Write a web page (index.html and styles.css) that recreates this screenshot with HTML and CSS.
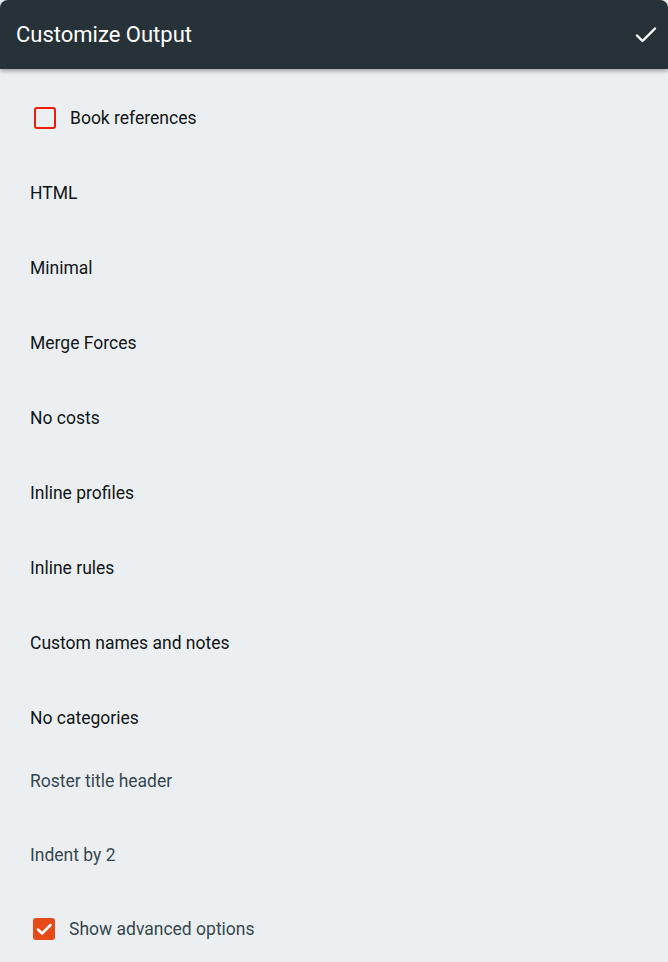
FILE: index.html
```html
<!DOCTYPE html>
<html lang="en">
<head>
  <meta charset="UTF-8">
  <title>Customize Output</title>
  <link rel="stylesheet" href="styles.css">
</head>
<body>

  <header class="toolbar">
    <h1>Customize Output</h1>
    <button class="done" aria-label="Done">
      <svg width="24" height="24" viewBox="0 0 24 24">
        <path d="M3 12.5l5.5 5.5L21 5.5" fill="none" stroke="#fff" stroke-width="2.4" stroke-linecap="round" stroke-linejoin="round"/>
      </svg>
    </button>
  </header>

  <div class="options">
    <label class="row check">
      <span class="box"></span>
      Book references
    </label>
    <div class="row">HTML</div>
    <div class="row">Minimal</div>
    <div class="row">Merge Forces</div>
    <div class="row">No costs</div>
    <div class="row">Inline profiles</div>
    <div class="row">Inline rules</div>
    <div class="row">Custom names and notes</div>
    <div class="row">No categories</div>
  </div>

  <div class="options advanced">
    <div class="row">Roster title header</div>
    <div class="row">Indent by 2</div>
    <label class="row check">
      <span class="box checked">
        <svg width="18" height="18" viewBox="0 0 18 18">
          <path d="M3 9.5l4 4L15.5 5" fill="none" stroke="#fff" stroke-width="2.5" stroke-linecap="round" stroke-linejoin="round"/>
        </svg>
      </span>
      Show advanced options
    </label>
  </div>

</body>
</html>
```

FILE: styles.css
```css
* {
  box-sizing: border-box;
}

body {
  margin: 0;
  height: 962px;
  overflow: hidden;
  font-family: Roboto, "Noto Sans", sans-serif;
  background-color: #eceff1;
  color: #111517;
}

.toolbar {
  display: flex;
  align-items: center;
  justify-content: space-between;
  height: 69px;
  padding: 0 10px 0 16px;
  background-color: #263238;
  border-radius: 8px 8px 0 0;
  box-shadow: 0 2px 4px rgba(0, 0, 0, 0.35);
}

.toolbar h1 {
  margin: 0;
  font-size: 22px;
  font-weight: 400;
  color: #fff;
}

.done {
  display: flex;
  padding: 0;
  border: none;
  background: none;
  cursor: pointer;
}

.options {
  display: flex;
  flex-direction: column;
  padding: 11px 0 0 30px;
}

.row {
  display: flex;
  align-items: center;
  height: 75px;
  font-size: 17.5px;
}

.advanced {
  padding-top: 0;
  margin-top: -11px;
}

.advanced .row {
  height: 74px;
  color: #37474f;
}

.check {
  gap: 14px;
  cursor: pointer;
}

.box {
  display: flex;
  align-items: center;
  justify-content: center;
  width: 22px;
  height: 22px;
  margin-left: 4px;
  border: 2px solid #f01c06;
  border-radius: 3px;
}

.box.checked {
  margin-left: 3px;
  border: none;
  background-color: #e64a19;
}
```
